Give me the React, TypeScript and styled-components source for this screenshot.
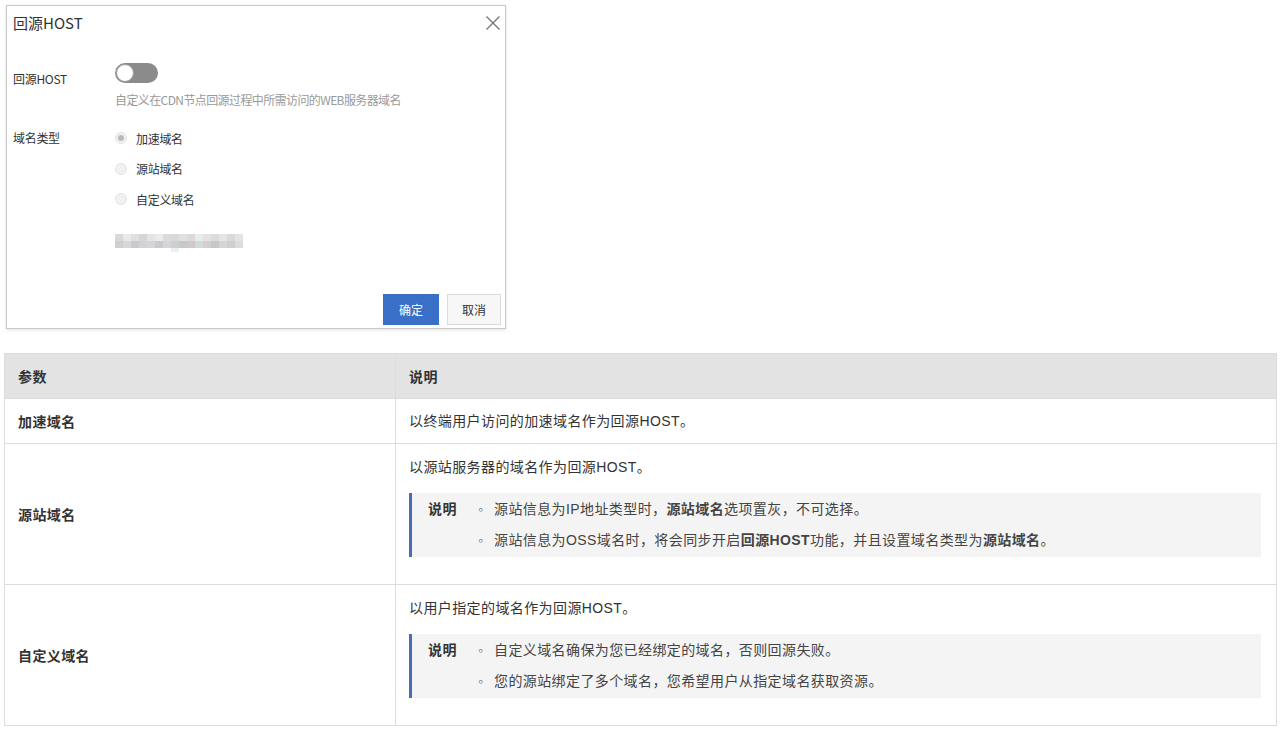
import React from 'react';
import styled, { createGlobalStyle } from 'styled-components';

const GlobalStyle = createGlobalStyle`
  body {
    margin: 0;
    background: #fff;
    font-family: "Liberation Sans", "Noto Sans CJK SC", sans-serif;
    color: #333;
  }
`;

const Page = styled.div`
  padding: 5px 6px 0 4px;
  width: 1273px;
`;

const Dialog = styled.div`
  margin-left: 2px;
  width: 498px;
  height: 322px;
  border: 1px solid #c9c9c9;
  box-shadow: 0 1px 3px rgba(0, 0, 0, 0.12);
  display: flex;
  flex-direction: column;
  font-family: "Noto Sans CJK SC", "Liberation Sans", sans-serif;
  margin-bottom: 24px;
`;

const DialogHeader = styled.div`
  display: flex;
  justify-content: space-between;
  align-items: center;
  padding: 0 4px 0 6px;
  height: 33px;
`;

const DialogTitle = styled.div`
  font-size: 15px;
  color: #333;
`;

const CloseButton = styled.button`
  border: none;
  background: none;
  padding: 0;
  width: 16px;
  height: 16px;
  display: flex;
  cursor: pointer;
`;

const DialogBody = styled.div`
  padding: 24px 0 0 6px;
  display: flex;
  flex-direction: column;
`;

const FormRow = styled.div<{ gap?: number }>`
  display: flex;
  margin-bottom: ${({ gap }) => gap ?? 0}px;
`;

const FormLabel = styled.div<{ offset?: number }>`
  width: 102px;
  flex-shrink: 0;
  font-size: 12px;
  letter-spacing: -0.3px;
  color: #333;
  line-height: 16px;
  margin-top: ${({ offset }) => offset ?? 0}px;
`;

const FormControl = styled.div`
  display: flex;
  flex-direction: column;
  align-items: flex-start;
`;

const Switch = styled.div<{ on?: boolean }>`
  width: 43px;
  height: 20px;
  border-radius: 10px;
  background: ${({ on }) => (on ? '#3a6fc7' : '#8b8b8b')};
  position: relative;
  box-sizing: border-box;
  &::after {
    content: '';
    position: absolute;
    top: 1px;
    left: ${({ on }) => (on ? '24px' : '1px')};
    width: 18px;
    height: 18px;
    border-radius: 50%;
    background: #fff;
    box-sizing: border-box;
    border: 1px solid #9a9a9a;
  }
`;

const Hint = styled.div`
  font-size: 12px;
  letter-spacing: -0.6px;
  color: #999;
  margin-top: 9px;
  line-height: 16px;
`;

const RadioGroup = styled.div`
  display: flex;
  flex-direction: column;
`;

const RadioRow = styled.label`
  display: flex;
  align-items: center;
  height: 30.5px;
  font-size: 12px;
  letter-spacing: -0.3px;
  color: #333;
`;

const RadioDot = styled.span<{ checked?: boolean }>`
  width: 12px;
  height: 12px;
  border-radius: 50%;
  box-sizing: border-box;
  border: 1px solid #e3e3e3;
  background: #f2f2f2;
  margin-right: 9px;
  display: flex;
  align-items: center;
  justify-content: center;
  &::after {
    content: '';
    width: 6px;
    height: 6px;
    border-radius: 50%;
    background: ${({ checked }) => (checked ? '#b9b9b9' : 'transparent')};
  }
`;

const Mosaic = styled.svg`
  margin-top: 19px;
  display: block;
`;

const DialogFooter = styled.div`
  margin-top: auto;
  display: flex;
  justify-content: flex-end;
  gap: 8px;
  padding: 0 4px 3px 0;
`;

const Button = styled.button<{ primary?: boolean }>`
  height: 31px;
  width: ${({ primary }) => (primary ? 56 : 54)}px;
  border: 1px solid ${({ primary }) => (primary ? '#3a6fc7' : '#dcdcdc')};
  background: ${({ primary }) => (primary ? '#3a6fc7' : '#f7f7f7')};
  color: ${({ primary }) => (primary ? '#fff' : '#333')};
  font-size: 12px;
  font-family: "Noto Sans CJK SC", sans-serif;
  padding: 0;
`;

const Table = styled.table`
  width: 100%;
  border-collapse: collapse;
  font-size: 14px;
  letter-spacing: 0.4px;
  color: #333;
  table-layout: fixed;
`;

const HeadCell = styled.th<{ w?: number }>`
  box-sizing: border-box;
  background: #e3e3e3;
  border: 1px solid #dcdcdc;
  height: 45px;
  text-align: left;
  padding: 0 13px;
  font-weight: bold;
  width: ${({ w }) => (w ? `${w}px` : 'auto')};
`;

const ParamCell = styled.td`
  border: 1px solid #dcdcdc;
  padding: 0 13px;
  font-weight: bold;
  vertical-align: middle;
`;

const DescCell = styled.td`
  border: 1px solid #dcdcdc;
  padding: 12px 14px 12px 13px;
  vertical-align: top;
  line-height: 22px;
`;

const Note = styled.div`
  display: flex;
  margin: 15px 1px 15px 0;
  background: #f4f4f4;
  border-left: 3px solid #4a6cb3;
  padding: 5px 0 6px 16px;
`;

const NoteLabel = styled.div`
  font-weight: bold;
  width: 50px;
  flex-shrink: 0;
`;

const NoteList = styled.ul`
  list-style: none;
  margin: 0;
  padding: 0;
  display: flex;
  flex-direction: column;
  gap: 9px;
`;

const NoteItem = styled.li`
  display: flex;
  color: #444;
  &::before {
    content: '◦';
    width: 16px;
    flex-shrink: 0;
    color: #666;
  }
`;

const mosaicColors = [
  '#d9d9dc', '#e9e9e6', '#dfe0e2', '#d6d5d9', '#e4e4e4', '#ecebea', '#dcdadd', '#d8d9dd',
  '#e2e1e2', '#dfd8d8', '#e7ecec', '#e4e3e4', '#dcdcde', '#e5e5e5', '#d9d9dc', '#e3e3e3',
  '#cfcfd2', '#d7d7d7', '#c9cacd', '#d2d1d6', '#d4d5d9', '#cbc9cc', '#d7d5d8', '#cfced3',
  '#c8c8cc', '#d0c8c9', '#d5d8d9', '#d1cfd1', '#c7c6ca', '#d5d5d6', '#cfcfd1', '#dcdcdc',
];

const MosaicBlur: React.FC = () => (
  <Mosaic width="128" height="18" viewBox="0 0 128 18">
    {mosaicColors.map((c, i) => (
      <rect
        key={i}
        x={(i % 16) * 8}
        y={Math.floor(i / 16) * 7}
        width="8"
        height="7"
        fill={c}
      />
    ))}
    <rect x="56" y="14" width="8" height="4" fill="#efefef" />
  </Mosaic>
);

type NoteProps = { items: React.ReactNode[] };

const NoteBox: React.FC<NoteProps> = ({ items }) => (
  <Note>
    <NoteLabel>说明</NoteLabel>
    <NoteList>
      {items.map((item, ind) => (
        <NoteItem key={ind}>
          <span>{item}</span>
        </NoteItem>
      ))}
    </NoteList>
  </Note>
);

const App: React.FC = () => (
  <>
    <GlobalStyle />
    <Page>
      <Dialog>
        <DialogHeader>
          <DialogTitle>回源HOST</DialogTitle>
          <CloseButton aria-label="close">
            <svg width="16" height="16" viewBox="0 0 16 16">
              <path d="M1.5 1.5L14.5 14.5M14.5 1.5L1.5 14.5" stroke="#777" strokeWidth="1.4" />
            </svg>
          </CloseButton>
        </DialogHeader>
        <DialogBody>
          <FormRow gap={15}>
            <FormLabel offset={8}>回源HOST</FormLabel>
            <FormControl>
              <Switch />
              <Hint>自定义在CDN节点回源过程中所需访问的WEB服务器域名</Hint>
            </FormControl>
          </FormRow>
          <FormRow>
            <FormLabel offset={7}>域名类型</FormLabel>
            <FormControl>
              <RadioGroup>
                <RadioRow>
                  <RadioDot checked />
                  加速域名
                </RadioRow>
                <RadioRow>
                  <RadioDot />
                  源站域名
                </RadioRow>
                <RadioRow>
                  <RadioDot />
                  自定义域名
                </RadioRow>
              </RadioGroup>
              <MosaicBlur />
            </FormControl>
          </FormRow>
        </DialogBody>
        <DialogFooter>
          <Button primary>确定</Button>
          <Button>取消</Button>
        </DialogFooter>
      </Dialog>

      <Table>
        <thead>
          <tr>
            <HeadCell w={391}>参数</HeadCell>
            <HeadCell>说明</HeadCell>
          </tr>
        </thead>
        <tbody>
          <tr>
            <ParamCell style={{ height: 44 }}>加速域名</ParamCell>
            <DescCell style={{ verticalAlign: 'middle', paddingTop: 0, paddingBottom: 0 }}>
              以终端用户访问的加速域名作为回源HOST。
            </DescCell>
          </tr>
          <tr>
            <ParamCell>源站域名</ParamCell>
            <DescCell>
              以源站服务器的域名作为回源HOST。
              <NoteBox
                items={[
                  <>源站信息为IP地址类型时，<b>源站域名</b>选项置灰，不可选择。</>,
                  <>源站信息为OSS域名时，将会同步开启<b>回源HOST</b>功能，并且设置域名类型为<b>源站域名</b>。</>,
                ]}
              />
            </DescCell>
          </tr>
          <tr>
            <ParamCell>自定义域名</ParamCell>
            <DescCell>
              以用户指定的域名作为回源HOST。
              <NoteBox
                items={[
                  '自定义域名确保为您已经绑定的域名，否则回源失败。',
                  '您的源站绑定了多个域名，您希望用户从指定域名获取资源。',
                ]}
              />
            </DescCell>
          </tr>
        </tbody>
      </Table>
    </Page>
  </>
);

export default App;
